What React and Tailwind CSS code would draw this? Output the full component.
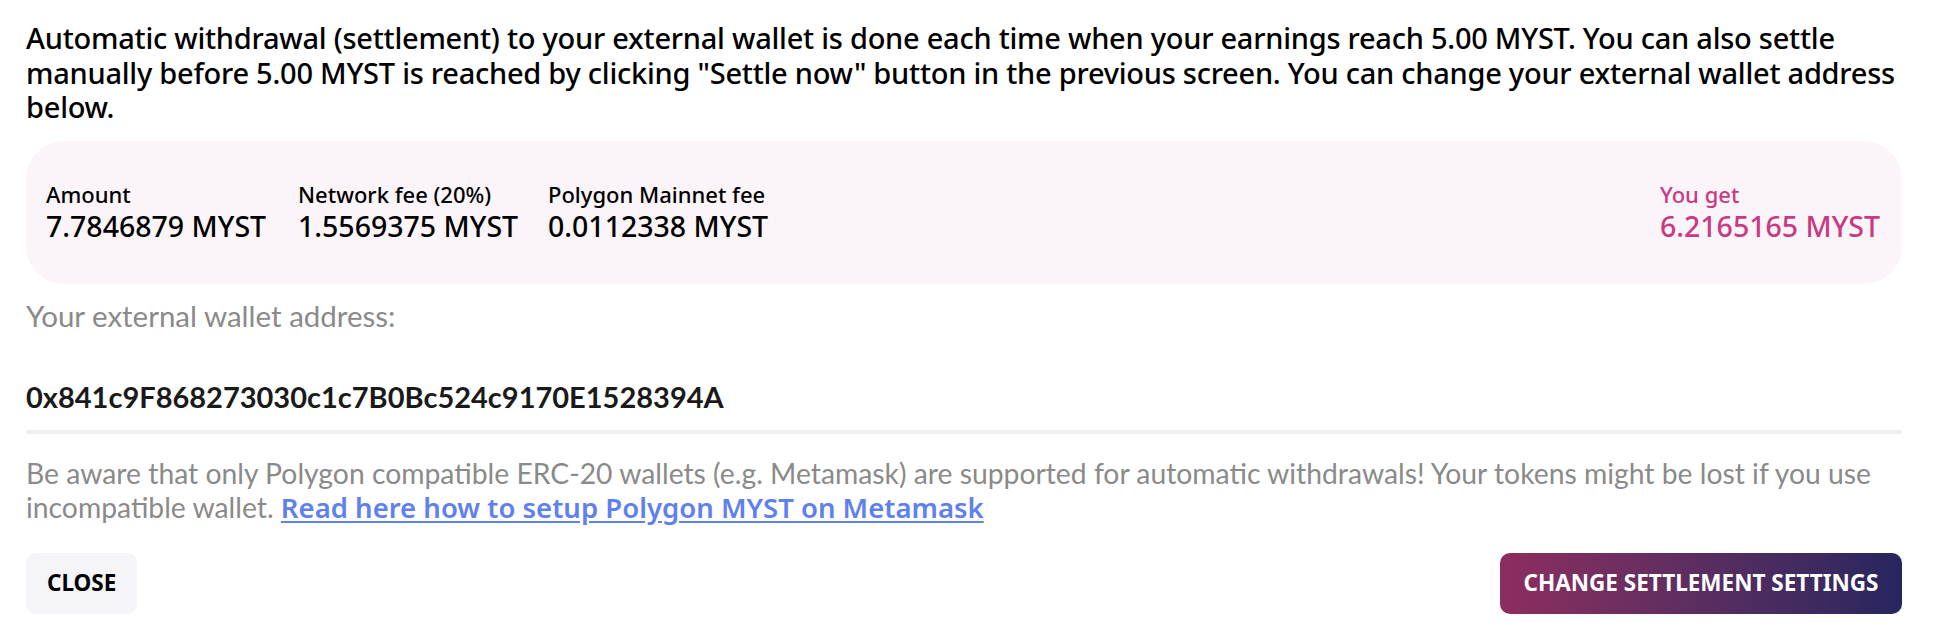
import React from 'react';

const ubuntu = "font-['Noto_Sans','Open_Sans',sans-serif]";
const lato = "font-['Lato',sans-serif]";

const fees = [
  { label: 'Amount', value: '7.7846879 MYST', width: 'w-[252px]' },
  { label: 'Network fee (20%)', value: '1.5569375 MYST', width: 'w-[250px]' },
  { label: 'Polygon Mainnet fee', value: '0.0112338 MYST', width: 'w-[250px]' },
];

const FeeItem = ({ label, value, width, pink }) => (
  <div className={`flex flex-col ${width || ''}`}>
    <span className={`${ubuntu} text-[22px] leading-[28px] font-medium ${pink ? 'text-[#c93a82]' : 'text-black'}`}>
      {label}
    </span>
    <span className={`${ubuntu} text-[28.5px] leading-[36px] font-medium ${pink ? 'text-[#c93a82]' : 'text-black'}`}>
      {value}
    </span>
  </div>
);

export default function App() {
  return (
    <div className="w-[1938px] h-[642px] bg-white pl-[26px] pr-[36px] pt-[21px] flex flex-col overflow-hidden">
      {/* intro */}
      <p className={`${ubuntu} text-[29px] leading-[34.5px] font-medium text-black tracking-[-0.25px]`}>
        Automatic withdrawal (settlement) to your external wallet is done each time when your earnings reach 5.00 MYST. You can also settle manually before 5.00 MYST is reached by clicking "Settle now" button in the previous screen. You can change your external wallet address below.
      </p>

      {/* fees panel */}
      <div className="mt-[16px] h-[143px] rounded-[38px] bg-[#fbf5f9] px-[20px] flex items-center justify-between">
        <div className="flex">
          {fees.map(f => (
            <FeeItem key={f.label} {...f} />
          ))}
        </div>
        <div className="pr-[2px]">
          <FeeItem label="You get" value="6.2165165 MYST" pink />
        </div>
      </div>

      {/* wallet */}
      <div className={`${lato} mt-[15px] text-[29.5px] leading-[34px] text-[#8a8a8a]`}>
        Your external wallet address:
      </div>
      <div className={`${lato} mt-[47px] text-[29px] leading-[34px] font-bold text-[#1a1a1a]`}>
        0x841c9F868273030c1c7B0Bc524c9170E1528394A
      </div>
      <div className="mt-[16px] h-[4px] bg-[#efeff3]"></div>

      {/* warning */}
      <p className={`${lato} mt-[22px] text-[28.3px] leading-[34px] text-[#8a8a8a]`}>
        Be aware that only Polygon compatible ERC-20 wallets (e.g. Metamask) are supported for automatic withdrawals! Your tokens might be lost if you use incompatible wallet.{' '}
        <a href="#" className={`${ubuntu} text-[27.5px] font-semibold text-[#5f80ef] underline underline-offset-[3px]`}>
          Read here how to setup Polygon MYST on Metamask
        </a>
      </p>

      {/* actions */}
      <div className="mt-[28px] flex items-center justify-between">
        <button className={`${ubuntu} h-[61px] px-[21px] rounded-[10px] bg-[#f4f4f9] text-[22.5px] font-bold text-black uppercase`}>
          Close
        </button>
        <button className={`${ubuntu} h-[61px] w-[402px] rounded-[10px] bg-gradient-to-r from-[#8e2c5f] to-[#27255f] text-[22.5px] font-bold text-white uppercase`}>
          Change settlement settings
        </button>
      </div>
    </div>
  );
}
